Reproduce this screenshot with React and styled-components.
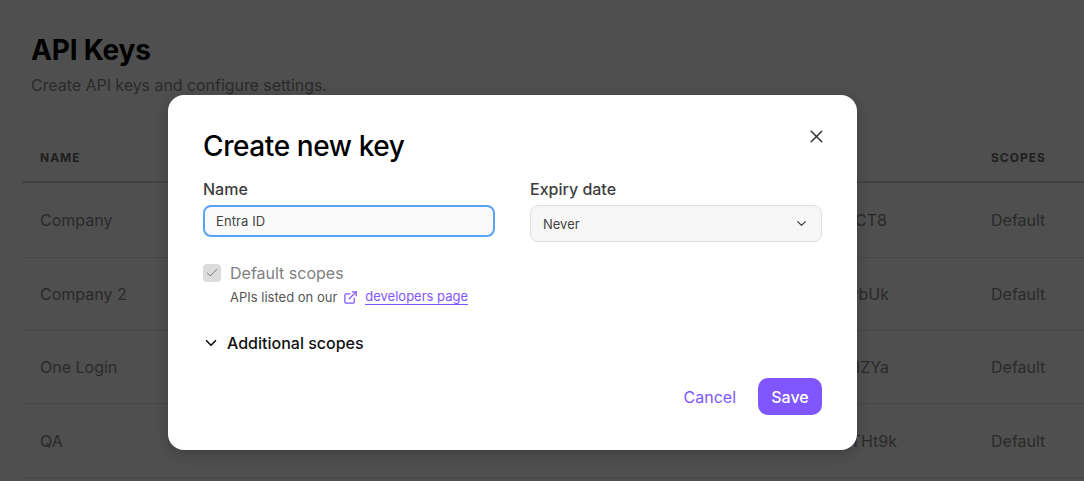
import React from "react";
import styled, { createGlobalStyle } from "styled-components";
import { Check, ChevronDown, ExternalLink, X } from "lucide-react";

const Global = createGlobalStyle`
  html, body { margin: 0; padding: 0; background: #fff; }
  body { font-family: Inter, "Noto Sans", sans-serif; overflow: hidden; }
  * { box-sizing: border-box; }
`;

const Page = styled.div`
  position: relative;
  width: 1084px;
  height: 481px;
  overflow: hidden;
  padding: 33px 0 0 22px;
`;
const Heading = styled.h1`
  margin: 0 0 0 9px;
  font-size: 28px;
  line-height: 34px;
  font-weight: 700;
  letter-spacing: -0.2px;
  color: #000;
`;
const Sub = styled.p`
  margin: 7px 0 0 9px;
  font-size: 16px;
  line-height: 22px;
  letter-spacing: -0.05px;
  color: #8c8c8c;
`;
const Table = styled.div`
  margin-top: 37px;
`;
const Row = styled.div`
  display: grid;
  grid-template-columns: 500px 263px 1fr;
  column-gap: 94px;
  align-items: center;
  height: ${(p) => p.$h}px;
  padding-left: 18px;
  border-bottom: ${(p) => (p.$head ? 2 : 1)}px solid ${(p) => (p.$head ? "#d8d8d8" : "#e4e4e4")};
`;
const HeadCell = styled.div`
  font-size: 12px;
  font-weight: 700;
  letter-spacing: 1px;
  color: #666;
  text-transform: uppercase;
`;
const Cell = styled.div`
  font-size: 16px;
  color: #888;
  white-space: nowrap;
`;
const KeyCell = styled(Cell)`
  text-align: right;
  padding-right: ${(p) => p.$pad}px;
`;

const Overlay = styled.div`
  position: absolute;
  inset: 0;
  background: rgba(0, 0, 0, 0.69);
  padding: 95px 0 0 168px;
`;
const Modal = styled.div`
  position: relative;
  width: 689px;
  height: 355px;
  background: #fff;
  border-radius: 16px;
  padding: 33px 35px 35px;
  display: flex;
  flex-direction: column;
  box-shadow: 0 4px 16px rgba(0, 0, 0, 0.2);
`;
const Close = styled.button`
  position: absolute;
  top: 29px;
  right: 29px;
  width: 24px;
  height: 24px;
  padding: 0;
  border: 0;
  background: none;
  color: #333;
  display: flex;
  align-items: center;
  justify-content: center;
`;
const Title = styled.h2`
  margin: 0;
  font-size: 28px;
  line-height: 36px;
  font-weight: 500;
  letter-spacing: -0.4px;
  color: #000;
`;
const Fields = styled.div`
  display: grid;
  grid-template-columns: 292px 292px;
  column-gap: 35px;
  margin-top: 16px;
`;
const Field = styled.div`
  display: flex;
  flex-direction: column;
  gap: 6px;
`;
const Label = styled.label`
  font-size: 16px;
  line-height: 19px;
  font-weight: 500;
  color: #3d3d3d;
`;
const Input = styled.div`
  height: 32px;
  border: 2px solid #5aa2f7;
  border-radius: 8px;
  background: #fafafa;
  padding: 0 11px;
  display: flex;
  align-items: center;
  font-size: 13px;
  letter-spacing: 0.1px;
  color: #444;
`;
const Select = styled.div`
  height: 37px;
  border: 1px solid #dedede;
  border-radius: 8px;
  background: #f6f6f6;
  padding: 0 12px;
  display: flex;
  align-items: center;
  justify-content: space-between;
  font-size: 13px;
  color: #444;
`;
const CheckRow = styled.div`
  display: flex;
  align-items: center;
  gap: 9px;
  margin-top: 22px;
  height: 18px;
`;
const CheckBox = styled.span`
  width: 18px;
  height: 18px;
  border-radius: 4px;
  background: #dcdcdc;
  color: #6f6f80;
  display: flex;
  align-items: center;
  justify-content: center;
`;
const CheckLabel = styled.span`
  font-size: 16px;
  color: #808080;
`;
const Hint = styled.div`
  display: flex;
  align-items: center;
  margin: 6px 0 0 27px;
  font-size: 13px;
  line-height: 18px;
  color: #555;
`;
const HintIcon = styled.span`
  display: flex;
  margin: 0 7px 0 6px;
  color: #7f56ff;
`;
const Link = styled.a`
  color: #7f56ff;
  text-decoration: none;
  border-bottom: 1px solid #7f56ff;
  line-height: 15px;
`;
const Disclosure = styled.div`
  display: flex;
  align-items: center;
  gap: 7px;
  margin: 27px 0 0 -1px;
  font-size: 16px;
  line-height: 20px;
  font-weight: 500;
  color: #111;
`;
const Actions = styled.div`
  margin-top: auto;
  display: flex;
  justify-content: flex-end;
  align-items: center;
  gap: 22px;
`;
const Cancel = styled.button`
  border: 0;
  background: none;
  padding: 0;
  font: inherit;
  font-size: 16px;
  color: #7f56ff;
`;
const Save = styled.button`
  width: 64px;
  height: 37px;
  border: 0;
  border-radius: 10px;
  background: #7f56ff;
  color: #fff;
  font: inherit;
  font-size: 16px;
  font-weight: 500;
`;

const rows = [
  { name: "Company", key: "Zk3vPqLmCT8", pad: 10, h: 75 },
  { name: "Company 2", key: "Qm7RtLwvbUk", pad: 8, h: 73 },
  { name: "One Login", key: "Xn4TfGsHZYa", pad: 8, h: 73 },
  { name: "QA", key: "Bd9KpVcTHt9k", pad: 0, h: 74 },
];

export default function App() {
  return (
    <>
      <Global />
      <Page>
        <Heading>API Keys</Heading>
        <Sub>Create API keys and configure settings.</Sub>
        <Table>
          <Row $head $h={50}>
            <HeadCell>Name</HeadCell>
            <HeadCell />
            <HeadCell>Scopes</HeadCell>
          </Row>
          {rows.map((r) => (
            <Row key={r.name} $h={r.h}>
              <Cell>{r.name}</Cell>
              <KeyCell $pad={r.pad}>{r.key}</KeyCell>
              <Cell>Default</Cell>
            </Row>
          ))}
        </Table>
        <Overlay>
          <Modal>
            <Close aria-label="Close">
              <X size={21} strokeWidth={1.7} />
            </Close>
            <Title>Create new key</Title>
            <Fields>
              <Field>
                <Label>Name</Label>
                <Input>Entra ID</Input>
              </Field>
              <Field>
                <Label>Expiry date</Label>
                <Select>
                  Never
                  <ChevronDown size={15} strokeWidth={1.8} color="#333" />
                </Select>
              </Field>
            </Fields>
            <CheckRow>
              <CheckBox>
                <Check size={14} strokeWidth={1.6} />
              </CheckBox>
              <CheckLabel>Default scopes</CheckLabel>
            </CheckRow>
            <Hint>
              APIs listed on our
              <HintIcon>
                <ExternalLink size={15} strokeWidth={2} />
              </HintIcon>
              <Link>developers page</Link>
            </Hint>
            <Disclosure>
              <ChevronDown size={18} strokeWidth={2.2} />
              Additional scopes
            </Disclosure>
            <Actions>
              <Cancel>Cancel</Cancel>
              <Save>Save</Save>
            </Actions>
          </Modal>
        </Overlay>
      </Page>
    </>
  );
}
